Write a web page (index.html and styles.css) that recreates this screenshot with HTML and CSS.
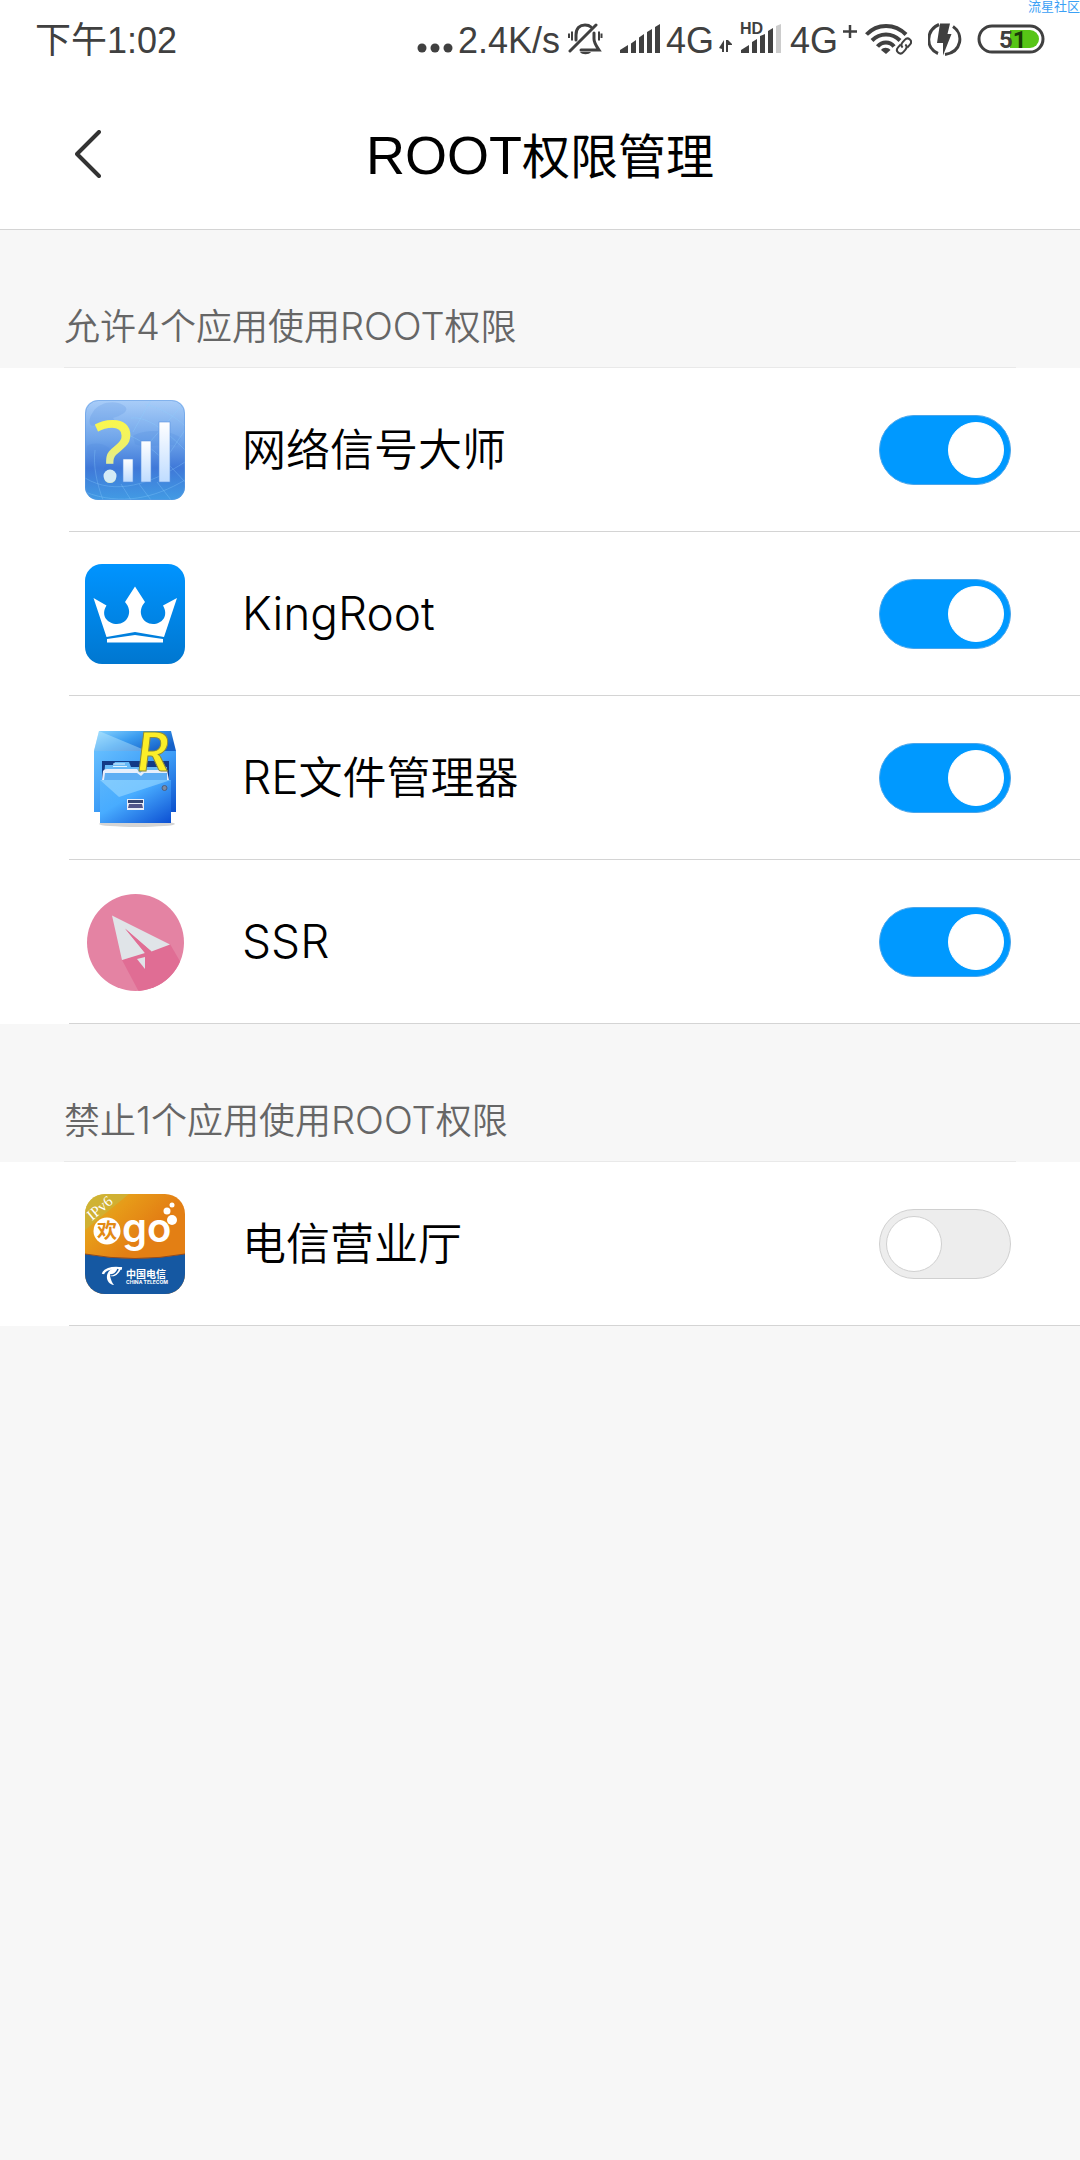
FILE: index.html
```html
<!DOCTYPE html>
<html lang="zh-CN">
<head>
    <meta charset="UTF-8">
    <meta name="viewport" content="width=device-width, initial-scale=1.0">
    <title>ROOT权限管理</title>
    <link rel="stylesheet" href="styles.css">
</head>
<body>
<div class="watermark">流星社区</div>

<div class="status_bar">
    <span class="clock">下午1:02</span>
    <div class="status_icons">
        <div class="status_group">
            <svg width="36" height="36" viewBox="0 0 36 36">
                <circle cx="5" cy="27" r="4.5"/><circle cx="18" cy="27" r="4.5"/><circle cx="31" cy="27" r="4.5"/>
            </svg>
            <span>2.4K/s</span>
        </div>
        <!-- vibrate / silent -->
        <svg class="mute" width="36" height="36" viewBox="0 0 36 36">
            <g fill="none" stroke="#404040" stroke-width="3" stroke-linecap="round">
                <path d="M8 19V14C8 7 12 4 17 4C20 4 22 5 23 6M26 12V18C26 22 29 26 31 29H13"/>
                <path d="M28 4L2 30"/>
            </g>
            <path d="M12 31H23C21 34 14 34 12 31Z"/>
            <path d="M1 12.500V17M4 10.500V19.500M31 10.500V19.500M33.500 12.500V17" stroke="#404040" stroke-width="2"/>
        </svg>
        <div class="status_group">
            <svg width="41" height="36" viewBox="0 0 41 36">
                <path d="M0 29L8 24V32H0ZM11 22.500L16 19V32H11ZM19 16.500L24 13V32H19ZM27 11L32 8V32H27ZM35 6L40 3V32H35Z"/>
            </svg>
            <span>4G</span>
            <svg width="13" height="36" viewBox="0 0 13 36">
                <path d="M0 27L5 19V31H3V28ZM7 19H9L13 23V24H9V31H7Z"/>
            </svg>
        </div>
        <div class="status_group">
            <svg width="45" height="36" viewBox="0 0 45 36">
                <path d="M1 29L9 24V32H1ZM12 21L17 18V32H12ZM20 15L25 13V32H20ZM28 10L33 7V32H28Z"/>
                <path d="M36 5L41 3V32H36Z" fill="#ccc"/>
                <text class="hd" x="0" y="13">HD</text>
            </svg>
            <span>4G</span>
            <svg width="14" height="36" viewBox="0 0 14 36">
                <path d="M7 4V17M0 10.500H14" stroke="#404040" stroke-width="2.500"/>
            </svg>
        </div>
        <svg class="wifi" width="47" height="36" viewBox="0 0 47 36">
            <g fill="none" stroke="#404040" stroke-width="4">
                <path d="M1.500 13.500C12 2 30 2 41 13.500"/>
                <path d="M7 19.500C15 11.500 27 11.500 35 19.500"/>
                <path d="M12.500 25.500C17 20 25 20 29 25.500"/>
            </g>
            <path d="M16 29C18 26 23 26 25.500 29L21 33Z"/>
            <g fill="none" stroke="#404040" stroke-width="2" transform="rotate(-48 39 25)">
                <path d="M38 21.500H34C29 21.500 29 28.500 34 28.500H37C40 28.500 41 27 41 25"/>
                <path d="M40 28.500H44C49 28.500 49 21.500 44 21.500H41C38 21.500 37 23 37 25"/>
            </g>
        </svg>
        <!-- fast charging -->
        <svg class="charge" width="34" height="36" viewBox="0 0 34 36">
            <path d="M11 3.500C-2 9 -3 27 10 32.500M25 5.500C36 13 34 31 17 33.500" fill="none" stroke="#404040" stroke-width="3"/>
            <path d="M12 2.500H22L19.500 13H23.500L15 34.500V22H9Z"/>
        </svg>
        <svg class="battery" width="68" height="36" viewBox="0 0 68 36">
            <rect x="2" y="5" width="64" height="26" rx="13" fill="#fff" stroke="#404040" stroke-width="3"/>
            <path d="M33 9H53A9 9 0 0 1 53 27H33Z" fill="#57c516"/>
            <text class="level" x="22" y="27">5<tspan fill="#1a3a08">1</tspan></text>
        </svg>
    </div>
</div>

<header class="title_bar">
    <button class="back_btn" type="button" aria-label="返回">
        <svg width="26" height="48" viewBox="0 0 26 48">
            <path d="M24 2L2 24L24 46" fill="none" stroke="#333" stroke-width="4" stroke-linecap="round" stroke-linejoin="round"/>
        </svg>
    </button>
    <h1><span class="latin">ROOT</span>权限管理</h1>
</header>

<main>
    <section>
        <h2>允许<span class="latin">4</span>个应用使用<span class="latin">ROOT</span>权限</h2>
        <ul class="app_list">
            <li class="app">
                <svg class="app_icon" viewBox="0 0 100 100">
                    <defs>
                        <linearGradient id="sky" x1="0" y1="0" x2="0" y2="1">
                            <stop offset="0" stop-color="#a9cdf8"/>
                            <stop offset=".4" stop-color="#6ea4ea"/>
                            <stop offset=".68" stop-color="#3f78d8"/>
                            <stop offset="1" stop-color="#429be4"/>
                        </linearGradient>
                        <linearGradient id="lemon" x1="0" y1="0" x2="0" y2="1">
                            <stop offset=".2" stop-color="#fdf944"/>
                            <stop offset=".5" stop-color="#eef06c"/>
                            <stop offset=".75" stop-color="#d5e8cc"/>
                        </linearGradient>
                        <linearGradient id="bar" x1="0" y1="0" x2="0" y2="1">
                            <stop offset="0" stop-color="#fff"/>
                            <stop offset="1" stop-color="#bfdcff"/>
                        </linearGradient>
                        <clipPath id="signalClip"><rect width="100" height="100" rx="13"/></clipPath>
                    </defs>
                    <g clip-path="url(#signalClip)">
                        <rect width="100" height="100" fill="url(#sky)"/>
                        <path d="M8 12C14 2 30 0 38 5C47 10 36 16 28 18C34 24 20 30 12 24C4 30 2 20 8 12ZM48 36C60 28 86 30 96 38L92 46C80 42 62 50 50 44ZM2 46C12 40 26 46 28 54C20 60 18 72 14 90C8 78 10 62 2 54Z" fill="#4d86dd" opacity=".2"/>
                        <path d="M48 32L66 0M58 50L98 4M80 60L100 30M46 18C64 16 84 34 100 50M40 34C60 40 80 60 100 82M60 4C76 8 92 18 100 26M0 78C30 96 66 84 100 62M0 92C36 106 70 98 100 80M10 50C8 66 12 84 18 100M36 84L46 100M54 84L66 100M72 82L86 100" fill="none" stroke="#8fd0ff" opacity=".3"/>
                    </g>
                    <rect x=".5" y=".5" width="99" height="99" rx="13" fill="none" stroke="#5b97e2" opacity=".5"/>
                    <text class="question" x="9" y="82" fill="url(#lemon)">?</text>
                    <circle cx="25" cy="76" r="6.500" fill="#d5ebf6"/>
                    <g fill="url(#bar)" stroke="#5a93e0" stroke-width=".6">
                        <rect x="38" y="59" width="10" height="23"/>
                        <rect x="56" y="41" width="10" height="41"/>
                        <rect x="74" y="22" width="11" height="60"/>
                    </g>
                </svg>
                <label for="signal">网络信号大师</label>
                <input class="switch" id="signal" type="checkbox" checked>
            </li>
            <li class="app">
                <svg class="app_icon" viewBox="0 0 100 100">
                    <defs>
                        <linearGradient id="king" x1="0" y1="0" x2="0" y2="1">
                            <stop offset="0" stop-color="#0094ff"/>
                            <stop offset="1" stop-color="#0077d0"/>
                        </linearGradient>
                    </defs>
                    <rect width="100" height="100" rx="17" fill="url(#king)"/>
                    <path d="M8.500 34L21.500 41.500C15 52 23 60 32 60C42 60 49 48 40 38L50 22.500L60 38C51 48 58 60 68 60C77 60 84 52 78 41.500L92 34L79 73L50 68L21.500 73Z" fill="#fff"/>
                    <path d="M22 75L50 71L78 75V78.500H22Z" fill="#fff"/>
                </svg>
                <label for="kingroot"><span class="latin">KingRoot</span></label>
                <input class="switch" id="kingroot" type="checkbox" checked>
            </li>
            <li class="app">
                <svg class="app_icon" viewBox="0 0 100 100">
                    <defs>
                        <linearGradient id="top" x1="0" y1="0" x2="1" y2=".6">
                            <stop offset="0" stop-color="#8cd6ff"/>
                            <stop offset=".5" stop-color="#3a9cf0"/>
                            <stop offset="1" stop-color="#1560c8"/>
                        </linearGradient>
                        <linearGradient id="case" x1="0" y1="0" x2="1" y2="1">
                            <stop offset="0" stop-color="#66bfff"/>
                            <stop offset=".5" stop-color="#3d9df7"/>
                            <stop offset="1" stop-color="#0b50cc"/>
                        </linearGradient>
                        <linearGradient id="drawer" x1="0" y1="0" x2="1" y2="1">
                            <stop offset="0" stop-color="#58b4fc"/>
                            <stop offset=".4" stop-color="#48acff"/>
                            <stop offset="1" stop-color="#0c4fd2"/>
                        </linearGradient>
                    </defs>
                    <ellipse cx="52" cy="96" rx="38" ry="3" fill="#aaa" opacity=".5"/>
                    <path d="M14 3H86L91 23H9Z" fill="url(#top)"/>
                    <path d="M14 3L62 23H9Z" fill="#c9efff" opacity=".4"/>
                    <path d="M9 23H91V84H9Z" fill="url(#case)"/>
                    <path d="M17 33H84V52H17Z" fill="#123a86"/>
                    <path d="M20 37H28L30 34H44L46 39H82V52H19Z" fill="#67b9f6"/>
                    <path d="M28 36H40M28 38.500H42" stroke="#e3f4ff"/>
                    <path d="M18 43Q19 41 22 41H52L55 45L58 42H82L84 52H17Z" fill="#e7effc"/>
                    <path d="M20 45H52L56 48L59 45H82V52H19Z" fill="#5eaef4"/>
                    <path d="M15 52H86V95H15Z" fill="url(#drawer)"/>
                    <path d="M15 52H86L34 69Z" fill="#a9e1ff" opacity=".5"/>
                    <rect x="42" y="71" width="17" height="11" fill="#e9eef8"/>
                    <path d="M43 72H58V75H43Z" fill="#364673"/>
                    <path d="M44 76H57L58 80H43Z" fill="#52568a"/>
                    <circle cx="79.500" cy="60" r="2.500" fill="#7d8ba2" stroke="#4c5e80"/>
                    <text class="script_r" x="52" y="43">R</text>
                </svg>
                <label for="files"><span class="latin">RE</span>文件管理器</label>
                <input class="switch" id="files" type="checkbox" checked>
            </li>
            <li class="app">
                <svg class="app_icon" viewBox="0 0 100 100">
                    <clipPath id="ssrClip"><circle cx="50.500" cy="50.500" r="48.500"/></clipPath>
                    <g clip-path="url(#ssrClip)">
                        <rect width="100" height="100" fill="#e483a3"/>
                        <path d="M37 68L85 52L100 78V100H54Z" fill="#e06d94"/>
                    </g>
                    <path d="M27 23.500L85 52.500L66.500 59.500L40 36.500L60 61L37 68Z" fill="#e0e4e8"/>
                    <path d="M40 36.500L60 61L66.500 59.500Z" fill="#e06d94"/>
                    <path d="M52 67L60 65V77Z" fill="#e0e4e8"/>
                </svg>
                <label for="ssr"><span class="latin">SSR</span></label>
                <input class="switch" id="ssr" type="checkbox" checked>
            </li>
        </ul>
    </section>

    <section>
        <h2>禁止<span class="latin">1</span>个应用使用<span class="latin">ROOT</span>权限</h2>
        <ul class="app_list">
            <li class="app">
                <svg class="app_icon" viewBox="0 0 100 100">
                    <defs>
                        <linearGradient id="orange" x1="0" y1="0" x2=".5" y2=".5">
                            <stop offset="0" stop-color="#d9b92c"/>
                            <stop offset=".5" stop-color="#e79a18"/>
                            <stop offset="1" stop-color="#e37f14"/>
                        </linearGradient>
                        <clipPath id="egoClip"><rect width="100" height="100" rx="20"/></clipPath>
                    </defs>
                    <g clip-path="url(#egoClip)">
                        <rect width="100" height="100" fill="url(#orange)"/>
                        <path d="M0 0H44L0 36Z" fill="#c9b53a" opacity=".7"/>
                        <path d="M0 60Q50 69 100 60V100H0Z" fill="#1558a2"/>
                        <path d="M0 60Q50 69 100 60" fill="none" stroke="#8c4a26"/>
                    </g>
                    <text class="ipv6" x="7" y="27" transform="rotate(-40 7 27)">IPv6</text>
                    <circle cx="22" cy="37" r="13.500" fill="#fff"/>
                    <text class="huan" x="12" y="44">欢</text>
                    <text class="go" x="37" y="48">go</text>
                    <g fill="#fff">
                        <circle cx="87" cy="26" r="5"/>
                        <circle cx="82" cy="17" r="3.500"/>
                        <circle cx="87" cy="11" r="2.500"/>
                    </g>
                    <path d="M37 73C33 82 29 83 25 82C26 86 27 89 29 91C20 90 19 77 29 74Z" fill="#fff"/>
                    <path d="M18 80C19 76 25 73 37 74.500" fill="none" stroke="#fff" stroke-width="2.500"/>
                    <path d="M25 81C29 81 32 78 33 75" fill="none" stroke="#1558a2" stroke-width="1.500"/>
                    <text class="telecom" x="41" y="84">中国电信</text>
                    <text class="telecom_en" x="41" y="90">CHINA TELECOM</text>
                </svg>
                <label for="telecom">电信营业厅</label>
                <input class="switch" id="telecom" type="checkbox">
            </li>
        </ul>
    </section>
</main>
</body>
</html>
```

FILE: styles.css
```css
*, *::before {
    box-sizing: border-box;
}

body {
    margin: 0;
    background-color: #f7f7f7;
    font-family: Inter, "Noto Sans CJK SC", sans-serif;
    font-weight: 350;
    color: #000;
}

.watermark {
    position: absolute;
    top: 0;
    right: 0;
    font-size: 13px;
    line-height: 13px;
    font-weight: 400;
    color: #3ba0f5;
}

/* status bar */
.status_bar {
    display: flex;
    justify-content: space-between;
    align-items: center;
    height: 78px;
    padding: 0 35px;
    background-color: #fff;
    font-family: "Liberation Sans", "Noto Sans CJK SC", sans-serif;
    font-size: 36px;
    line-height: 40px;
    font-weight: 400;
    color: #404040;
}

.status_bar span {
    padding-top: 4px;
}

.status_bar svg {
    fill: #404040;
}

.status_icons {
    display: flex;
    align-items: center;
    gap: 8px;
}

.status_group {
    display: flex;
    align-items: center;
    gap: 5px;
}

.mute {
    margin-right: 8px;
}

.charge {
    margin: 0 7px 0 8px;
}

.hd {
    font-size: 16px;
    font-weight: 700;
}

.level {
    font-family: Roboto, sans-serif;
    font-size: 24px;
    font-weight: 700;
}

/* title bar */
.title_bar {
    display: grid;
    grid-template-columns: 72px 1fr 72px;
    align-items: center;
    height: 152px;
    padding: 0 52px;
    background-color: #fff;
    border-bottom: 1px solid #d4d4d4;
}

.back_btn {
    display: flex;
    align-items: center;
    justify-content: center;
    width: 72px;
    height: 72px;
    padding: 0;
    border: 0;
    background: none;
    cursor: pointer;
}

h1 {
    margin: 0;
    padding-top: 4px;
    font-size: 48px;
    line-height: 64px;
    font-weight: 400;
    text-align: center;
}

h1 .latin {
    font-family: "Liberation Sans", sans-serif;
    font-size: 54px;
}

/* lists */
h2 {
    height: 138px;
    margin: 0 64px;
    padding-top: 72px;
    border-bottom: 1px solid #e9e9e9;
    font-size: 36px;
    line-height: 48px;
    font-weight: 350;
    color: #666;
}

h2 .latin {
    font-size: 38px;
    font-weight: 300;
}

.app_list {
    margin: 0;
    padding: 0 0 0 69px;
    list-style: none;
    background-color: #fff;
}

.app {
    display: flex;
    align-items: center;
    height: 164px;
    padding: 0 69px 0 16px;
    border-bottom: 1px solid #d4d4d4;
}

.app_icon {
    width: 100px;
    height: 100px;
    overflow: visible;
}

.app label {
    flex: 1;
    padding-left: 57px;
    font-size: 44px;
    line-height: 60px;
}

.app .latin {
    font-size: 46px;
    font-weight: 300;
}

.switch {
    appearance: none;
    width: 132px;
    height: 70px;
    margin: 0;
    padding: 6px;
    border: 1px solid #d0d0d0;
    border-radius: 35px;
    background-color: #ededed;
    cursor: pointer;
}

.switch::before {
    content: "";
    display: block;
    width: 56px;
    height: 56px;
    border: 1px solid #d0d0d0;
    border-radius: 50%;
    background-color: #fff;
}

.switch:checked {
    border-color: #4aa5ea;
    background-color: #0099ff;
}

.switch:checked::before {
    margin-left: auto;
    border-color: #fff;
}

/* lettering inside the app icons */
.question {
    font-family: "Noto Sans", sans-serif;
    font-size: 86px;
    line-height: 86px;
    font-weight: 500;
}

.script_r {
    font-family: Lato, sans-serif;
    font-size: 54px;
    font-style: italic;
    font-weight: 700;
    fill: #fbee28;
    stroke: #8a8a3c;
    stroke-width: 1px;
}

.ipv6 {
    font-family: "Liberation Serif", serif;
    font-size: 15px;
    fill: #fff;
}

.huan {
    font-size: 20px;
    font-weight: 700;
    fill: #e38a14;
}

.go {
    font-family: Inter, sans-serif;
    font-size: 40px;
    font-weight: 600;
    fill: #fff;
}

.telecom {
    font-size: 10px;
    font-weight: 700;
    fill: #fff;
}

.telecom_en {
    font-size: 5px;
    font-weight: 700;
    fill: #fff;
}
```
